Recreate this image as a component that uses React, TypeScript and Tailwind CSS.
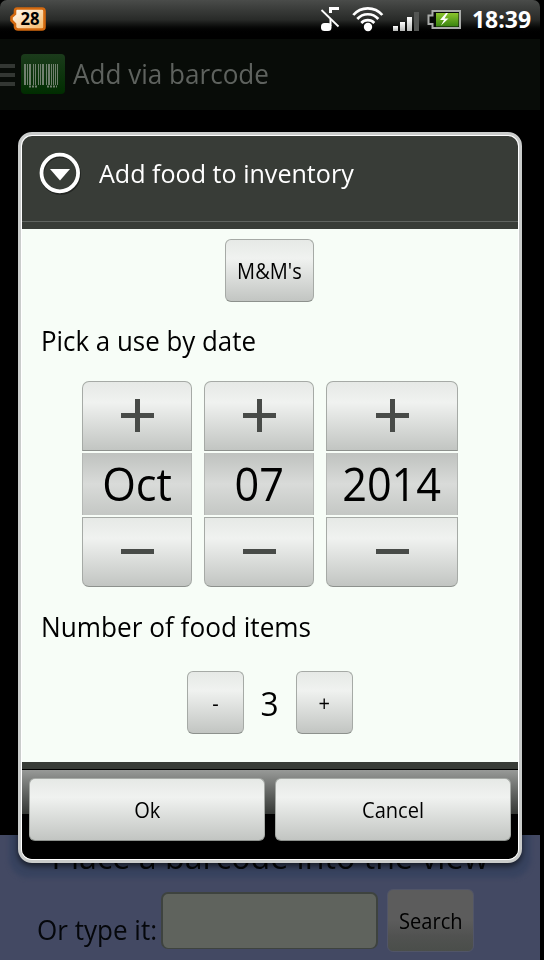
import React from "react";

const FONT = "font-['Open_Sans','Noto_Sans',sans-serif]";
const KEY =
  "border border-[#a6aaa6] border-b-[#8d918d] bg-linear-to-b from-[#e6e9e6] via-[#f0f2f0] via-30% to-[#c2c5c2] text-black";

type LabelProps = { children: React.ReactNode; className?: string };

function Label({ children, className = "" }: LabelProps) {
  return <span className={`inline-block whitespace-nowrap ${className}`}>{children}</span>;
}

function KeyLabel({ children }: { children: React.ReactNode }) {
  return <Label className="scale-x-[0.912] text-[22px]">{children}</Label>;
}

function Sign({ plus }: { plus?: boolean }) {
  return (
    <svg width="33" height="33" viewBox="0 0 33 33" shapeRendering="crispEdges" className="-mt-[1px] ml-[1px]">
      <rect x="0" y="14" width="33" height="5" fill="#484b48" />
      {plus && <rect x="14" y="0" width="5" height="33" fill="#484b48" />}
    </svg>
  );
}

function Picker({ width, value }: { width: string; value: string }) {
  return (
    <div className={`flex flex-col gap-[2px] ${width}`}>
      <button className={`flex h-[70px] items-center justify-center rounded-t-[7px] ${KEY}`}>
        <Sign plus />
      </button>
      <div className="flex h-[62px] items-center justify-center border-x border-[#b4b7b4] bg-linear-to-b from-[#bfc2bf] via-[#d9dbd9] to-[#c4c7c4] text-black">
        <Label className="scale-x-[0.94] pb-[2px] text-[46px] leading-[60px]">{value}</Label>
      </div>
      <button className={`flex h-[70px] items-center justify-center rounded-b-[7px] ${KEY}`}>
        <Sign />
      </button>
    </div>
  );
}

function StatusBar() {
  return (
    <div className="flex h-[39px] w-[540px] items-start rounded-t-[7px] bg-linear-to-b from-[#4a4c4a] via-[#292b29] via-50% to-black to-88%">
      <svg width="540" height="39" viewBox="0 0 540 39">
        <defs>
          <linearGradient id="badge" x1="0" y1="0" x2="1" y2="1">
            <stop offset="0" stopColor="#fff" />
            <stop offset="1" stopColor="#f8b660" />
          </linearGradient>
          <linearGradient id="cell" x1="0" y1="0" x2="0" y2="1">
            <stop offset="0" stopColor="#8bc52d" />
            <stop offset="1" stopColor="#398410" />
          </linearGradient>
          <linearGradient id="bar" x1="0" y1="0" x2="0" y2="1">
            <stop offset="0" stopColor="#fff" />
            <stop offset="1" stopColor="#b5b7b5" />
          </linearGradient>
        </defs>
        <path d="M17 8.500H42Q44.500 8.500 44.500 11V27Q44.500 29.500 42 29.500H18Q15.500 29.500 15 27V24L11.500 20.500V17L15 14V11Q15 8.500 17 8.500Z" fill="url(#badge)" stroke="#d3690f" strokeWidth="2.600" />
        <text x="20.500" y="25" fontSize="17.500" fontWeight="700" textLength="19" lengthAdjust="spacingAndGlyphs">28</text>
        <g stroke="#fff" fill="none">
          <path d="M321.500 10L338.500 26.500" strokeWidth="1.800" />
          <path d="M330.500 13V8.500H339" strokeWidth="3" />
          <path d="M330.500 19V26" strokeWidth="2" />
        </g>
        <rect x="321" y="23" width="10.500" height="8" rx="3.500" fill="#fff" />
        <g stroke="#fff" strokeWidth="2.700" fill="none">
          <path d="M353.300 15A19 19 0 0 1 382.300 15" />
          <path d="M357.300 19A14 14 0 0 1 378.300 19" />
          <path d="M361.300 23A9 9 0 0 1 374.300 23" />
        </g>
        <circle cx="368" cy="27" r="4.200" fill="#fff" />
        <g fill="url(#bar)">
          <rect x="393" y="26" width="5" height="5" />
          <rect x="400" y="22" width="5" height="9" />
          <rect x="407" y="17" width="5" height="14" />
        </g>
        <rect x="414" y="12" width="5" height="19" fill="#545654" />
        <path d="M432.500 11H460V28H432.500V24H428.500V15.500H432.500Z" fill="#080b08" stroke="#a9aba9" strokeWidth="2" />
        <rect x="436" y="13" width="22.500" height="13.500" fill="url(#cell)" />
        <path d="M446 13L440 20L444 20L441 25.500L448.500 18.500L444.500 18.500L448 13Z" fill="#fff" />
        <text x="472" y="28" fontSize="23.500" fontWeight="700" fill="#fff" textLength="59" lengthAdjust="spacingAndGlyphs">18:39</text>
      </svg>
    </div>
  );
}

const STRIPES = [
  [24, 2], [27, 1], [29, 2], [33, 1], [35, 1], [38, 1], [40, 1], [42, 2],
  [46, 1], [48, 2], [51, 1], [53, 1], [55, 1], [57, 1],
];

function AppBar() {
  return (
    <div className="flex h-[71px] w-[540px] items-center bg-[#080c08]">
      <svg width="66" height="71" viewBox="0 0 66 71">
        <defs>
          <linearGradient id="tile" x1="0" y1="0" x2="0" y2="1">
            <stop offset="0" stopColor="#1b3b1b" />
            <stop offset="1" stopColor="#002d00" />
          </linearGradient>
        </defs>
        <g fill="#333733">
          <rect y="25" width="15" height="4" />
          <rect y="34" width="15" height="4" />
          <rect y="43" width="15" height="4" />
        </g>
        <rect x="21" y="15" width="44" height="40" rx="4" fill="url(#tile)" />
        <g fill="#71806f">
          {STRIPES.map(([x, w]) => (
            <rect key={x} x={x} y="25" width={w} height="21" />
          ))}
        </g>
        <path d="M29 47.500H38M47 47.500H57" stroke="#71806f" strokeWidth="2" strokeDasharray="2 1" />
      </svg>
      <Label className="ml-[7px] origin-left scale-x-[0.966] pb-px text-[27px] text-[#5e625e]">Add via barcode</Label>
    </div>
  );
}

function BarcodePanel() {
  return (
    <div className="relative h-[125px] w-[540px] overflow-hidden bg-[#434963]">
      <div className="absolute -top-5 left-[9px] h-[63px] w-[522px] rounded-[20px] bg-[#38435f] blur-[2px]" />
      <div className="relative flex h-[55px] justify-center">
        <Label className="scale-x-[0.975] text-[33px] leading-[43px] text-[#050709]">Place a barcode into the view</Label>
      </div>
      <div className="relative flex items-start pl-[37px]">
        <Label className="w-[124px] origin-left scale-x-[0.93] pt-[22px] text-[28px] leading-[34px] text-[#05070b]">Or type it:</Label>
        <div className="mt-[2px] h-[57px] w-[217px] rounded-[7px] border-2 border-b border-[#3e433f] bg-[#5f635d]" />
        <button className="-mt-px ml-[9px] flex h-[63px] w-[87px] items-center justify-center rounded-[6px] border border-[#515568] bg-linear-to-b from-[#5c5c5c] from-50% via-[#515251] via-75% to-[#4a4e4a] text-black">
          <KeyLabel>Search</KeyLabel>
        </button>
      </div>
    </div>
  );
}

function Dialog() {
  return (
    <section className="absolute top-[132px] left-[18px] h-[731px] w-[504px] rounded-[14px] border-[3px] border-[#cacccb] bg-white p-px shadow-[0_3px_6px_rgba(0,0,0,0.6)]">
      <div className="flex h-full flex-col overflow-hidden rounded-[10px] bg-[#383c37]">
        <header className="flex h-[86px] shrink-0 items-start border-b border-[#606460] pl-[17px] text-white">
          <svg width="42" height="43" viewBox="0 0 42 43" className="mt-[16px]">
            <circle cx="21.500" cy="22.300" r="18.500" fill="none" stroke="#222522" strokeWidth="4" />
            <circle cx="20.800" cy="21" r="18.300" fill="none" stroke="#fff" strokeWidth="3.800" />
            <path d="M11 17H31L21 28.500Z" fill="#fff" />
          </svg>
          <Label className="mt-[19px] ml-[18px] origin-left scale-x-[0.965] text-[26px] leading-[36px]">Add food to inventory</Label>
        </header>
        <div className="h-[7px] shrink-0" />
        <main className="flex h-[533px] shrink-0 flex-col bg-[#f7fdf7] pt-[10px] text-black">
          <div className="flex justify-center pr-[1px]">
            <button className={`flex h-[63px] w-[89px] items-center justify-center rounded-[6px] ${KEY}`}>
              <KeyLabel>M&amp;M's</KeyLabel>
            </button>
          </div>
          <div className="flex h-[79px] items-center pb-[3px] pl-[19px]">
            <Label className="origin-left scale-x-[0.925] text-[28px]">Pick a use by date</Label>
          </div>
          <div className="flex gap-3 pl-[60px]">
            <Picker width="w-[110px]" value="Oct" />
            <Picker width="w-[110px]" value="07" />
            <Picker width="w-[132px]" value="2014" />
          </div>
          <div className="flex h-[84px] items-center pb-[6px] pl-[19px]">
            <Label className="origin-left scale-x-[0.935] text-[28px]">Number of food items</Label>
          </div>
          <div className="flex h-[63px] items-center pl-[165px]">
            <button className={`h-[63px] w-[57px] rounded-[6px] ${KEY}`}><KeyLabel>-</KeyLabel></button>
            <div className="flex w-[52px] justify-center pr-px"><Label className="scale-x-[0.96] pt-[2px] text-[33px]">3</Label></div>
            <button className={`h-[63px] w-[57px] rounded-[6px] pr-px ${KEY}`}><KeyLabel>+</KeyLabel></button>
          </div>
        </main>
        <div className="h-[7px] shrink-0" />
        <footer className="flex flex-1 items-start gap-[10px] border-t border-black bg-linear-to-b from-[#989a98] to-[#353835] bg-[length:100%_44px] bg-no-repeat bg-black px-[7px] pt-[8px] text-black">
          <button className={`flex h-[63px] w-[236px] items-center justify-center rounded-[6px] ${KEY}`}><KeyLabel>Ok</KeyLabel></button>
          <button className={`flex h-[63px] w-[236px] items-center justify-center rounded-[6px] ${KEY}`}><KeyLabel>Cancel</KeyLabel></button>
        </footer>
      </div>
    </section>
  );
}

export default function App() {
  return (
    <div className={`relative flex h-[960px] w-[544px] flex-col overflow-hidden bg-black ${FONT}`}>
      <StatusBar />
      <AppBar />
      <div className="flex-1" />
      <BarcodePanel />
      <Dialog />
    </div>
  );
}
